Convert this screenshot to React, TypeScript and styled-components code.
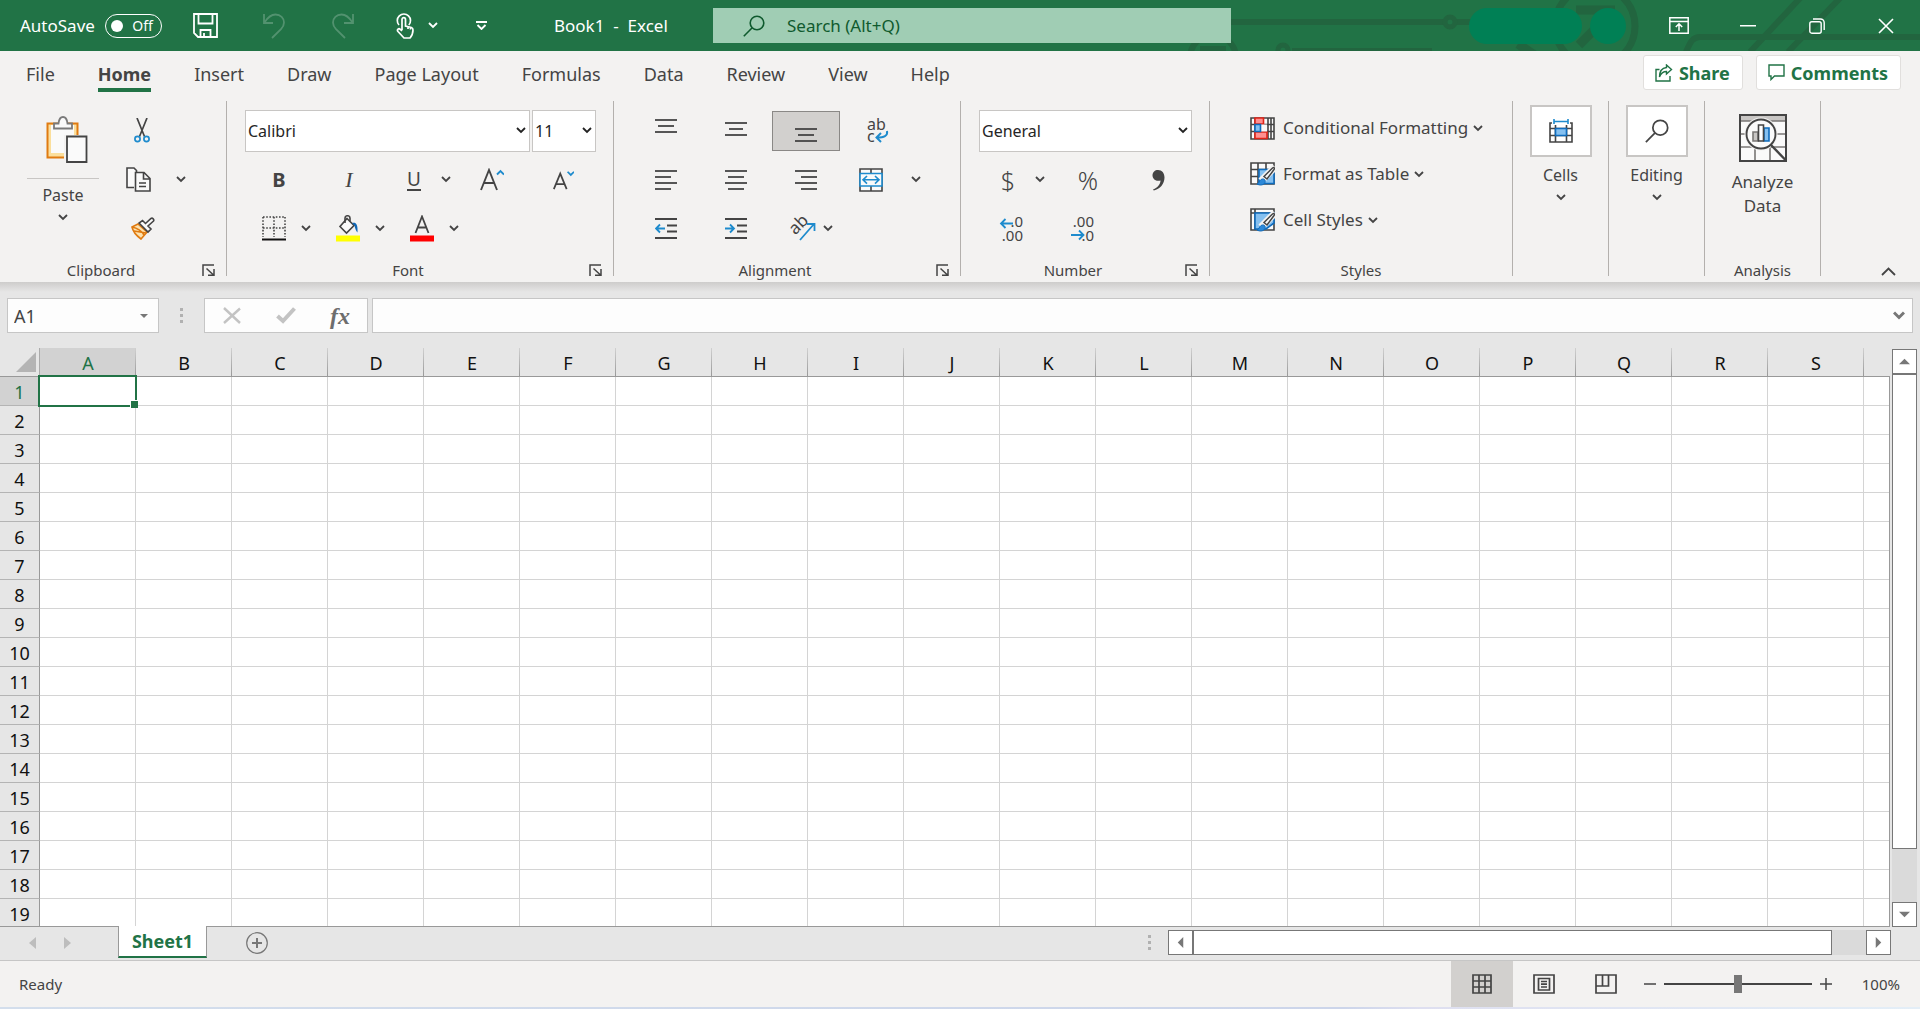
import React from "react";
import styled, { createGlobalStyle } from "styled-components";

const FONT = '"Noto Sans", "Open Sans", sans-serif';
const INK = "#444444";
const GREEN = "#217346";
const BLUE = "#1e8bcd";

const COLUMNS = "ABCDEFGHIJKLMNOPQRST".split("");
const ROWS = Array.from({ length: 19 }, (_, i) => i + 1);
const TABS = ["File", "Home", "Insert", "Draw", "Page Layout", "Formulas", "Data", "Review", "View", "Help"];

const GlobalStyle = createGlobalStyle`
  * { box-sizing: border-box; }
  body { margin: 0; font-family: ${FONT}; color: ${INK}; background: #e6e6e6; overflow: hidden; }
  button, input, select { font-family: inherit; color: inherit; }
  button { border: 0; padding: 0; background: none; cursor: pointer; }
  svg { display: block; flex: none; }
`;

const Window = styled.div`
  display: flex;
  flex-direction: column;
  height: 100vh;
  overflow: hidden;
`;

/* ---------- title bar ---------- */

const TitleBar = styled.header`
  position: relative;
  display: flex;
  align-items: center;
  height: 51px;
  flex: none;
  background: ${GREEN};
  color: #fff;
  font-size: 17px;
  line-height: 24px;
`;

const Circuit = styled.svg`
  position: absolute;
  top: 0;
  right: 0;
`;

const AutoSave = styled.label`
  display: flex;
  align-items: center;
  gap: 10px;
  width: 178px;
  padding-left: 20px;
`;

const Toggle = styled.button`
  display: flex;
  align-items: center;
  justify-content: space-between;
  width: 57px;
  height: 24px;
  padding: 0 8px 0 5px;
  border: 1px solid #fff;
  border-radius: 12px;
  font-size: 14px;
  line-height: 20px;

  &::before {
    content: "";
    width: 12px;
    height: 12px;
    border-radius: 50%;
    background: #fff;
  }
`;

const QuickButton = styled.button<{ $w: number; $dim?: boolean }>`
  display: flex;
  align-items: center;
  justify-content: center;
  gap: 14px;
  width: ${(p) => p.$w}px;
  height: 51px;
  opacity: ${(p) => (p.$dim ? 0.22 : 1)};
`;

const DocTitle = styled.div`
  width: 215px;
  padding-left: 56px;
  white-space: pre;
`;

const SearchBox = styled.label`
  position: relative;
  display: flex;
  align-items: center;
  gap: 22px;
  flex: 0 1 518px;
  height: 35px;
  padding-left: 30px;
  background: #a0cdb4;
  color: #0f5a2e;
`;

const SearchInput = styled.input`
  flex: 1;
  min-width: 0;
  border: 0;
  padding: 0;
  outline: 0;
  background: none;
  font-size: 17px;
  line-height: 24px;

  &::placeholder { color: #0f5a2e; opacity: 1; }
`;

const WindowControls = styled.div`
  position: relative;
  display: flex;
  align-items: center;
  margin-left: auto;
`;

const AccountName = styled.button`
  width: 113px;
  height: 36px;
  margin-right: 8px;
  border-radius: 18px;
  background: #008055;
`;

const Avatar = styled.button`
  width: 36px;
  height: 36px;
  margin-right: 18px;
  border-radius: 50%;
  background: #008055;
`;

const WindowButton = styled.button`
  display: flex;
  align-items: center;
  justify-content: center;
  width: 69px;
  height: 51px;
`;

/* ---------- tab row ---------- */

const TabRow = styled.nav`
  display: flex;
  align-items: flex-start;
  gap: 43px;
  height: 46px;
  flex: none;
  padding: 4px 19px 0 26px;
  background: #f3f2f1;
`;

const Tab = styled.button<{ $active: boolean }>`
  height: 37px;
  padding-top: 4px;
  border-bottom: 4px solid ${(p) => (p.$active ? GREEN : "transparent")};
  font-size: 18px;
  line-height: 28px;
  font-weight: ${(p) => (p.$active ? 700 : 400)};
`;

const TabActions = styled.div`
  display: flex;
  gap: 13px;
  margin-left: auto;
`;

const ActionButton = styled.button`
  display: flex;
  align-items: center;
  gap: 6px;
  height: 35px;
  padding: 0 12px 0 11px;
  border: 1px solid #e1dfdd;
  border-radius: 3px;
  background: #fff;
  color: ${GREEN};
  font-size: 18px;
  line-height: 26px;
  font-weight: 700;
`;

/* ---------- ribbon ---------- */

const Ribbon = styled.section`
  display: flex;
  flex: none;
  height: 185px;
  padding: 4px 0 6px;
  background: #f3f2f1;
`;

const Group = styled.div<{ $w: number }>`
  display: flex;
  flex-direction: column;
  justify-content: space-between;
  width: ${(p) => p.$w}px;
  height: 175px;
  border-right: 1px solid #b3b0ad;
`;

const GroupBody = styled.div<{ $left?: number }>`
  display: flex;
  padding-left: ${(p) => p.$left ?? 0}px;
`;

const GroupFooter = styled.div<{ $bare?: boolean }>`
  display: flex;
  align-items: flex-start;
  height: 16px;
  padding-right: ${(p) => (p.$bare ? 0 : 11)}px;
  font-size: 15px;
  line-height: 20px;

  & > button { align-self: flex-end; }
`;

const GroupLabel = styled.span`
  flex: 1;
  text-align: center;
`;

const Rows = styled.div`
  padding-top: 5px;
`;

const ToolRow = styled.div<{ $gap?: number; $left?: number }>`
  display: flex;
  align-items: center;
  gap: ${(p) => p.$gap ?? 0}px;
  height: 49px;
  padding-left: ${(p) => p.$left ?? 0}px;
`;

const Tool = styled.button<{ $w: number; $pressed?: boolean }>`
  display: flex;
  align-items: center;
  justify-content: center;
  gap: 7px;
  width: ${(p) => p.$w}px;
  height: 40px;
  border: 1px solid ${(p) => (p.$pressed ? "#8a8886" : "transparent")};
  background: ${(p) => (p.$pressed ? "#d2d0ce" : "transparent")};
`;

const Split = styled.div`
  display: flex;
`;

const PasteButton = styled.button`
  display: flex;
  flex-direction: column;
  align-items: center;
  width: 72px;
  padding-top: 15px;
  font-size: 16px;
  line-height: 22px;
`;

const PasteRule = styled.span`
  align-self: stretch;
  height: 1px;
  margin: 15px 0 5px;
  background: #c8c6c4;
`;

const ChevronSlot = styled.span`
  padding-top: 8px;
`;

const SelectWrap = styled.label<{ $w: number }>`
  display: grid;
  align-items: center;
  width: ${(p) => p.$w}px;

  & > * { grid-area: 1 / 1; }
  & > svg { justify-self: end; margin-right: 4px; pointer-events: none; }
`;

const Select = styled.select`
  appearance: none;
  width: 100%;
  height: 42px;
  padding: 0 2px;
  border: 1px solid #c8c6c4;
  border-radius: 0;
  background: #fff;
  color: #262626;
  font-size: 16px;
`;

const StyleList = styled.div`
  display: flex;
  flex-direction: column;
  padding-top: 4px;
`;

const StyleButton = styled.button`
  display: flex;
  align-items: center;
  gap: 8px;
  height: 46px;
  font-size: 17px;
  line-height: 24px;
  white-space: nowrap;
`;

const StyleName = styled.span`
  display: flex;
  align-items: center;
  gap: 5px;
`;

const TileButton = styled.button`
  display: flex;
  flex-direction: column;
  align-items: center;
  width: 100%;
  padding-top: 4px;
  font-size: 16px;
  line-height: 22px;
`;

const Tile = styled.span`
  display: flex;
  align-items: center;
  justify-content: center;
  width: 62px;
  height: 52px;
  margin-bottom: 7px;
  border: 2px solid #c8c6c4;
  background: #fff;
`;

const AnalyzeButton = styled.button`
  display: flex;
  flex-direction: column;
  align-items: center;
  gap: 8px;
  width: 100%;
  padding-top: 13px;
  font-size: 17px;
  line-height: 24px;
`;

const CollapseButton = styled.button`
  align-self: flex-end;
  margin: 0 24px 0 auto;
`;

/* ---------- formula bar ---------- */

const FormulaBar = styled.section`
  display: flex;
  flex: none;
  height: 66px;
  padding: 16px 7px 15px;
  background: linear-gradient(#cdcccb, #e6e6e6 10px);
`;

const NameBox = styled.label`
  display: flex;
  align-items: center;
  width: 152px;
  height: 35px;
  padding: 0 10px 0 6px;
  border: 1px solid #c6c6c6;
  background: #fdfdfd;
`;

const NameInput = styled.input`
  flex: 1;
  min-width: 0;
  padding: 0;
  border: 0;
  outline: 0;
  background: none;
  font-size: 18px;
`;

const Grip = styled.span`
  display: flex;
  flex-direction: column;
  gap: 3px;

  & > i { width: 3px; height: 3px; background: #b1b1b1; }
`;

const GripSlot = styled.div`
  display: flex;
  align-items: center;
  justify-content: center;
  width: 45px;
`;

const FormulaButtons = styled.div`
  display: flex;
  align-items: center;
  width: 164px;
  margin-right: 4px;
  border: 1px solid #c6c6c6;
  background: #fdfdfd;

  & > button { display: flex; justify-content: center; width: 54px; }
`;

const FxText = styled.span`
  font: italic bold 24px/30px "Liberation Serif", serif;
  color: #6d6d6d;
`;

const FormulaField = styled.div`
  display: flex;
  align-items: center;
  flex: 1;
  padding-right: 7px;
  border: 1px solid #c6c6c6;
  background: #fdfdfd;
`;

const FormulaInput = styled(NameInput)`
  padding: 0 6px;
`;

/* ---------- sheet ---------- */

const SheetArea = styled.main`
  display: flex;
  flex: 1;
  min-height: 0;
  padding-right: 2px;
`;

const SheetView = styled.div`
  position: relative;
  flex: 1;
  min-width: 0;
  overflow: hidden;
  border-bottom: 1px solid #999;

  &::after {
    content: "";
    position: absolute;
    top: 28px;
    right: 0;
    bottom: 0;
    width: 1px;
    background: #999;
  }
`;

const Table = styled.table`
  width: 0;
  table-layout: fixed;
  border-collapse: separate;
  border-spacing: 0;
  background: #fff;
  color: #111;
`;

const ColHead = styled.th<{ $active: boolean }>`
  width: 96px;
  height: 29px;
  padding: 3px 0 0;
  border-bottom: 1px solid #999;
  background: linear-gradient(#d0d0d0, #999) right / 1px 100% no-repeat,
    ${(p) => (p.$active ? "#d2d2d2" : "#e6e6e6")};
  color: ${(p) => (p.$active ? GREEN : "#111")};
  font-size: 18px;
  font-weight: 400;
  line-height: 25px;
`;

const Corner = styled.th`
  width: 40px;
  height: 29px;
  padding: 0 3px 4px 0;
  border-right: 1px solid #ababab;
  border-bottom: 1px solid #999;
  background: #e6e6e6;
  vertical-align: bottom;

  & > button { display: block; margin-left: auto; }
`;

const RowHead = styled.th<{ $active: boolean }>`
  height: 29px;
  padding: 2px 0 0;
  border-right: 1px solid #999;
  border-bottom: 1px solid #b4b4b4;
  background: ${(p) => (p.$active ? "#d2d2d2" : "#e6e6e6")};
  color: ${(p) => (p.$active ? GREEN : "#111")};
  font-size: 18px;
  font-weight: 400;
  line-height: 26px;
  text-align: center;
`;

const Cell = styled.td`
  position: relative;
  padding: 0;
  border-right: 1px solid #d4d4d4;
  border-bottom: 1px solid #d4d4d4;
`;

const Selection = styled.div`
  position: absolute;
  inset: -2px;
  z-index: 1;
  border: 2px solid ${GREEN};

  &::after {
    content: "";
    position: absolute;
    right: -3px;
    bottom: -3px;
    width: 7px;
    height: 7px;
    border: solid #fff;
    border-width: 1px 0 0 1px;
    background: ${GREEN};
  }
`;

const ScrollArrow = styled.button`
  display: flex;
  align-items: center;
  justify-content: center;
  flex: 0 0 25px;
  border: 1px solid #777;
  background: #fff;
`;

const VScroll = styled.div`
  display: flex;
  flex-direction: column;
  width: 25px;
  margin: 1px 1px 0 2px;
  background: #dadada;
`;

const HScroll = styled.div`
  display: flex;
  flex: 0 1 723px;
  height: 25px;
  background: #dadada;
`;

const Track = styled.div<{ $vertical?: boolean }>`
  display: flex;
  flex-direction: ${(p) => (p.$vertical ? "column" : "row")};
  flex: 1;
`;

const Thumb = styled.div<{ $size: number }>`
  flex: 0 0 ${(p) => p.$size}%;
  border: 1px solid #777;
  background: #fff;
`;

/* ---------- sheet tabs ---------- */

const SheetBar = styled.footer`
  display: flex;
  align-items: flex-start;
  flex: none;
  height: 34px;
  padding-right: 29px;
  border-bottom: 1px solid #c6c6c6;
  background: #e6e6e6;
`;

const SheetNav = styled.div`
  display: flex;
  align-items: center;
  gap: 28px;
  width: 118px;
  height: 31px;
  padding-left: 29px;
`;

const SheetTab = styled.button`
  position: relative;
  width: 89px;
  height: 32px;
  margin-top: -1px;
  border: solid #999;
  border-width: 0 1px;
  border-bottom: 2px solid ${GREEN};
  background: #fff;
  color: ${GREEN};
  font-size: 18px;
  font-weight: 700;
  line-height: 28px;
`;

const AddSheet = styled.button`
  margin: 5px 0 0 39px;
`;

const HScrollSlot = styled.div`
  display: flex;
  align-items: center;
  justify-content: flex-end;
  gap: 17px;
  flex: 1;
  padding-top: 3px;
`;

/* ---------- status bar ---------- */

const StatusBar = styled.footer`
  display: flex;
  align-items: center;
  flex: none;
  height: 46px;
  padding: 0 20px 0 19px;
  background: #f3f2f1;
  font-size: 15px;
  line-height: 22px;
`;

const Desktop = styled.div`
  flex: none;
  height: 2px;
  background: linear-gradient(90deg, #d3deec, #ccd5ea 70%, #dedff0 74%, #e3eef7);
`;

const ViewButtons = styled.div`
  display: flex;
  margin-left: auto;
`;

const ViewButton = styled.button<{ $active?: boolean }>`
  display: flex;
  align-items: center;
  justify-content: center;
  width: 62px;
  height: 46px;
  background: ${(p) => (p.$active ? "#d2d0ce" : "transparent")};
`;

const Zoom = styled.div`
  display: flex;
  align-items: center;
  gap: 8px;
  padding: 0 30px 0 7px;
`;

const ZoomSlider = styled.input`
  appearance: none;
  width: 148px;
  height: 18px;
  margin: 0;
  background: linear-gradient(${INK}, ${INK}) center / 100% 2px no-repeat;

  &::-webkit-slider-thumb {
    appearance: none;
    width: 8px;
    height: 18px;
    background: #777;
  }
`;

/* ---------- icons ---------- */

const Chevron = ({ color = INK }: { color?: string }) => (
  <svg width="10" height="7" viewBox="0 0 10 7" fill="none" stroke={color} strokeWidth="1.8">
    <path d="M1 1l4 4 4-4" />
  </svg>
);

const Triangle = ({ dir, color = "#777", size = 11 }: { dir: "up" | "down" | "left" | "right"; color?: string; size?: number }) => {
  const d = { up: "M0 9h12L6 3z", down: "M0 3h12L6 9z", left: "M9 0v12L3 6z", right: "M3 0v12l6-6z" }[dir];
  return (
    <svg width={size} height={size} viewBox="0 0 12 12">
      <path d={d} fill={color} />
    </svg>
  );
};

const Lines = ({ rows, shift = 0 }: { rows: [number, number][]; shift?: number }) => (
  <svg width="22" height="24" viewBox="0 0 22 24" stroke={INK} strokeWidth="1.8">
    {rows.map(([a, b], i) => (
      <path key={i} d={`M${a} ${i * 6 + 3 + shift}H${b}`} />
    ))}
  </svg>
);

const IndentIcon = ({ right }: { right?: boolean }) => (
  <svg width="22" height="24" viewBox="0 0 22 24" fill="none" stroke={INK} strokeWidth="1.8">
    <path d="M0 2h22M12 8.500h10M12 14.500h10M0 21h22" />
    <path d={right ? "M0 11.500h9M5 7.500l4 4-4 4" : "M10 11.500H1M5 7.500l-4 4 4 4"} stroke={BLUE} />
  </svg>
);

const SaveIcon = () => (
  <svg width="25" height="25" viewBox="0 0 25 25" fill="none" stroke="#fff" strokeWidth="1.8">
    <path d="M1 1h23v23H5l-4-4zM5.500 1v9.500h14V1M7.500 24v-7h10v7M11 24v-4" />
  </svg>
);

const UndoIcon = ({ flip }: { flip?: boolean }) => (
  <svg width="24" height="26" viewBox="0 0 24 26" fill="none" stroke="#fff" strokeWidth="1.8" transform={flip ? "scale(-1 1)" : undefined}>
    <path d="M2 1v9h9M2.500 9.500C6 4 9 1.500 13.500 1.500c5 0 8.500 3.500 8.500 8 0 3-1.200 4.800-3 6.700L10 25" />
  </svg>
);

const TouchIcon = () => (
  <svg width="18" height="26" viewBox="0 0 18 26" fill="none" stroke="#fff" strokeWidth="1.7">
    <path d="M3 12a6.600 6.600 0 1 1 9.800 0" />
    <path d="M6 17V6.500c0-2.500 3.500-2.500 3.500 0V13l6 1.500c1.300.4 1.500 1.200 1.500 2.500 0 3-.8 5.500-3 8H8L2 18.500c-1.500-2 .8-3.500 2.300-2.200L6 18M12 13.500V16M14.500 14.200V16.500" />
  </svg>
);

const CustomizeIcon = () => (
  <svg width="11" height="9" viewBox="0 0 11 9" fill="none" stroke="#fff" strokeWidth="1.8">
    <path d="M0 1h11M1.500 4l4 4 4-4" />
  </svg>
);

const Magnifier = ({ size = 22, color = INK, width = 1.6 }: { size?: number; color?: string; width?: number }) => (
  <svg width={size} height={size} viewBox="0 0 22 22" fill="none" stroke={color} strokeWidth={width}>
    <circle cx="14" cy="8" r="6.800" />
    <path d="M9.200 12.800L.8 21.200" />
  </svg>
);

const RibbonDisplayIcon = () => (
  <svg width="20" height="17" viewBox="0 0 20 17" fill="none" stroke="#fff" strokeWidth="1.500">
    <path d="M.8.800h18.400v15.400H.800zM.800 4.500h18.400M10 14V7M6.800 10L10 6.800 13.200 10" />
  </svg>
);

const RestoreIcon = () => (
  <svg width="16" height="16" viewBox="0 0 16 16" fill="none" stroke="#fff" strokeWidth="1.400">
    <rect x=".8" y="3.800" width="11.400" height="11.400" rx="2" />
    <path d="M4 1h7.500A3.700 3.700 0 0 1 15.200 4.700V12" />
  </svg>
);

const ShareIcon = () => (
  <svg width="18" height="18" viewBox="0 0 18 18" fill="none" stroke={GREEN} strokeWidth="1.400">
    <path d="M4.500 5.500H1V17h14v-5M11.500 1l5 4.500-5 4.500V7.500C8 7.500 6 9 4.500 13c0-5.500 2.500-9 7-9.500z" />
  </svg>
);

const CommentIcon = () => (
  <svg width="17" height="17" viewBox="0 0 17 17" fill="none" stroke={GREEN} strokeWidth="1.400">
    <path d="M1 1h15v11H6.500L3 15.500V12H1z" />
  </svg>
);

const PasteIcon = () => (
  <svg width="49" height="47" viewBox="-7 0 49 47" fill="none">
    <path d="M1.500 7.500h30v34h-30z" fill="#fbdf9c" stroke="#e07b11" strokeWidth="2" />
    <path d="M5 9h23v28H5z" fill="#fafafa" />
    <path d="M8 12.500v-5h4.500C13 3 15 1 17 1s4 2 4.500 6.500H26v5z" fill="#fafafa" stroke="#7a7a7a" strokeWidth="1.800" />
    <path d="M18 19h24v28H18z" fill="#f3f2f1" />
    <path d="M21 20.500h19.500v25.500H21z" fill="#fafafa" stroke={INK} strokeWidth="1.800" />
  </svg>
);

const CutIcon = () => (
  <svg width="16" height="25" viewBox="0 0 16 25" fill="none" strokeWidth="1.700">
    <path d="M3 0l7.500 18.500M13 0L5.500 18.500" stroke={INK} />
    <circle cx="3.500" cy="21" r="2.600" stroke={BLUE} />
    <circle cx="12.500" cy="21" r="2.600" stroke={BLUE} />
  </svg>
);

const CopyIcon = () => (
  <svg width="25" height="25" viewBox="0 0 25 25" stroke={INK} strokeWidth="1.600" fill="#fafafa">
    <path d="M8 20.500H1V1h7l2.500 2.500V20" />
    <path d="M9.500 5.500h8.500l6 6V24H9.500zM17.500 5.500V12H24M13 16h7M13 19.500h7" />
  </svg>
);

const PainterIcon = () => (
  <svg width="25" height="23" viewBox="0 0 25 23" strokeWidth="1.600">
    <path d="M2 10l6-3 9 8-6 7C7 19 3 15 2 10z" fill="#fde3b0" stroke="#e07b11" />
    <path d="M4 14l12 2M2 10c5 1 9 3 12 8" stroke="#e07b11" fill="none" />
    <path d="M9 6l9 9 3-3-3-3 5.500-5c1-1.500-1-3.500-2.500-2.500L15.500 6.500 12.500 3.500z" fill="#fafafa" stroke={INK} />
  </svg>
);

const FormatA = ({ down }: { down?: boolean }) => (
  <svg width={down ? 22 : 24} height="24" viewBox="0 0 24 24" fill="none" strokeWidth="1.900">
    <path d={down ? "M2 22L9 5l7 17M4.500 16.500h9" : "M1 22L9 2l8 20M4 15h10"} stroke={INK} />
    <path d={down ? "M17 3l3.500 3.500L24 3" : "M17 6.500L20.500 3 24 6.500"} stroke={BLUE} />
  </svg>
);

const BoldIcon = styled.span`
  font-size: 20px;
  line-height: 24px;
  font-weight: 700;
`;

const ItalicIcon = styled.span`
  font: italic 22px/24px "Liberation Serif", serif;
`;

const UnderlineIcon = styled.span`
  border-bottom: 2px solid ${INK};
  font-size: 19px;
  line-height: 20px;
`;

const BordersIcon = () => (
  <svg width="24" height="25" viewBox="0 0 24 25" fill="none" stroke={INK}>
    <path d="M1 1h22M1 12h22M1 1v20M12 1v20M23 1v20" strokeWidth="1.600" strokeDasharray="1.600 1.600" />
    <path d="M0 23.500h24" stroke="#111" strokeWidth="2" />
  </svg>
);

const FillIcon = () => (
  <svg width="24" height="27" viewBox="0 0 24 27" fill="none">
    <path d="M11 3.500l7 7L10.500 18 4 11.500z" fill="#fafafa" stroke={INK} strokeWidth="1.600" />
    <path d="M9 8V3c0-3 5-3 5 0v3.500" stroke={INK} strokeWidth="1.600" />
    <path d="M16 8c4-1 6 1 5.500 9.500C20 16 19 13 18.500 10.500z" fill="#1066b5" />
    <path d="M0 20.500h24v6H0z" fill="#ff0" />
  </svg>
);

const FontColorIcon = () => (
  <svg width="24" height="27" viewBox="0 0 24 27" fill="none">
    <path d="M5.500 18L12 1.500 18.500 18M8 12.500h8" stroke={INK} strokeWidth="1.800" />
    <path d="M0 20.500h24v6H0z" fill="red" />
  </svg>
);

const IconSvg = styled.svg`
  overflow: visible;
`;

const IconText = styled.text`
  font-family: ${FONT};
  fill: ${INK};
  stroke: none;
`;

const WrapIcon = () => (
  <IconSvg width="22" height="26" viewBox="0 0 22 26" fill="none">
    <IconText x="0" y="12" fontSize="16">ab</IconText>
    <IconText x="0" y="24" fontSize="16">c</IconText>
    <path d="M20 13c1 5-3 6.500-10 6.500M14 15l-4.500 4.500L14 24" stroke={BLUE} strokeWidth="2" />
  </IconSvg>
);

const MergeIcon = () => (
  <svg width="24" height="24" viewBox="0 0 24 24" fill="none" strokeWidth="1.600">
    <path d="M1 1h22v22H1zM12 1v22" fill="#fafafa" stroke={INK} />
    <path d="M1 5.500h22v12.500H1z" fill="#fafafa" stroke={BLUE} />
    <path d="M4 11.800h16M8 8l-4 3.800L8 15.600M16 8l4 3.800-4 3.800" stroke={BLUE} />
  </svg>
);

const OrientationIcon = () => (
  <IconSvg width="24" height="24" viewBox="0 0 24 24" fill="none">
    <IconText x="-2" y="14" fontSize="17" transform="rotate(-45 6 10)">ab</IconText>
    <path d="M8 23L22 7M15 7h7.500v7" stroke={BLUE} strokeWidth="1.800" />
  </IconSvg>
);

const DecimalIcon = ({ decrease }: { decrease?: boolean }) => (
  <IconSvg width="24" height="26" viewBox="0 0 24 26" fill="none">
    <IconText x="23" y="11" fontSize="15" textAnchor="end">{decrease ? ".00" : ".0"}</IconText>
    <IconText x="23" y="25" fontSize="15" textAnchor="end">{decrease ? ".0" : ".00"}</IconText>
    <path d={decrease ? "M0 19h12M8 14.500l4.500 4.500L8 23.500" : "M13 7.500H1M5.500 3L1 7.500 5.500 12"} stroke={BLUE} strokeWidth="1.800" />
  </IconSvg>
);

const DollarText = styled.span`
  font-size: 25px;
  line-height: 30px;
  font-weight: 300;
`;

const CommaIcon = () => (
  <svg width="13" height="22" viewBox="0 0 13 22">
    <path d="M1 20.500C6 18.500 8.500 15 8.500 11.500 3 13 .5 9 .5 6.500.5 3 3 1 6 1c4 0 6.500 3 6.500 7.500C12.500 15 8 20 1.800 21.500z" fill={INK} />
  </svg>
);

const ConditionalIcon = () => (
  <svg width="25" height="23" viewBox="0 0 25 23" fill="none" strokeWidth="1.600">
    <path d="M1 1h23v21H1zM1 7.500h23M1 14.500h23M5 1v21M18 1v21M21 1v21" fill="#fafafa" stroke={INK} />
    <path d="M5 1h8.500v6H5zM5 15h12v6.500H5z" fill="#ff9090" stroke="#e02418" />
    <path d="M11 7.500h6v7h-6z" fill="#fafafa" />
    <path d="M5 7.500h5.500v7H5z" fill="#85c0f0" stroke="#0f6cbd" />
  </svg>
);

const TableStyleIcon = ({ whole }: { whole?: boolean }) => (
  <svg width="25" height="24" viewBox="0 0 25 24" fill="none" strokeWidth="1.600">
    <path d={whole ? "M1 1h23v21H1zM1 5h23M5 1v21" : "M1 1h23v21H1zM1 7.500h23M1 14.500h23M8 1v21M16 1v21"} fill="#fafafa" stroke={INK} />
    <path d={whole ? "M5 5h19v10l-8 6H5z" : "M9 7.500h15v14H9z"} fill="#85c0f0" stroke="#0f6cbd" />
    <path d="M25 5L11 19" stroke="#f3f2f1" strokeWidth="7" />
    <path d="M14 14.500L22.500 6c1.500-1 2.500 0 1.500 1.500L17 17z" fill="#fafafa" stroke={INK} strokeWidth="1.500" />
    <path d="M7 22c2-.5 2-3 4-4.500 3-1.500 5 .5 4 3-1.500 3-5.500 3-8 1.500z" fill="#2b88d8" stroke="#0f6cbd" strokeWidth="1" />
  </svg>
);

const CellsIcon = () => (
  <svg width="24" height="24" viewBox="0 0 24 24" fill="none" strokeWidth="1.600">
    <path d="M3 4H1v19h22V4h-2M1 9.500h22M1 16.500h22M6.500 6v17M17.500 6v17" stroke={INK} />
    <path d="M6.500 9.500h11v7h-11z" fill="#85c0f0" stroke="#0f6cbd" />
    <path d="M5 2.500h14M5 0v5M19 0v5" stroke={BLUE} />
  </svg>
);

const AnalyzeIcon = () => (
  <svg width="48" height="48" viewBox="0 0 48 48" fill="none">
    <path d="M1 1h46v46H1z" fill="#fafafa" />
    <path d="M1 1h46v6H1z" fill="#c8c6c4" />
    <path d="M1 7h46M1 20h46M1 33h46M16 33v14M31 33v14" stroke="#797775" strokeWidth="1.600" />
    <path d="M1 1h46v46H1z" stroke={INK} strokeWidth="2" />
    <circle cx="22" cy="20" r="16.500" fill="#f3f2f1" />
    <circle cx="22" cy="20" r="14.500" fill="#fafafa" stroke={INK} strokeWidth="1.900" />
    <path d="M14 18h5v9h-5z" fill="#c8c6c4" stroke="#797775" strokeWidth="1.600" />
    <path d="M25 14h5v13h-5z" fill="#85c0f0" stroke="#0f6cbd" strokeWidth="1.600" />
    <path d="M19.500 11h5v16h-5z" fill="#fff" stroke={INK} strokeWidth="1.600" />
    <path d="M32 31l15 15.500" stroke={INK} strokeWidth="2.400" />
  </svg>
);

const LauncherIcon = () => (
  <svg width="13" height="12" viewBox="0 0 13 12" fill="none" stroke={INK} strokeWidth="1.500">
    <path d="M1 12V1h11M4.500 4.500l7 6.500M12 5v6.200H6" />
  </svg>
);

const Launcher = ({ name }: { name: string }) => (
  <button aria-label={`${name} settings`}>
    <LauncherIcon />
  </button>
);

const More = ({ name, w = 20 }: { name: string; w?: number }) => (
  <Tool $w={w} aria-label={`${name} options`}>
    <Chevron />
  </Tool>
);

const GripDots = () => (
  <Grip>
    <i />
    <i />
    <i />
  </Grip>
);

/* ---------- sections ---------- */

const Title = () => (
  <TitleBar>
    <Circuit width="920" height="51" viewBox="0 0 920 51" fill="none" stroke="#22653f" strokeWidth="6" aria-hidden="true">
      <path d="M231 22h213M456 22h30M292 51h140M686 52c4-9 6-15 14-15h220M750 52L802 -4M788 52L842 -4" />
      <circle cx="450" cy="22" r="5" strokeWidth="5" />
      <circle cx="283" cy="50" r="5" strokeWidth="5" />
      <circle cx="213" cy="58" r="23" />
      <path d="M200 49h26" />
      <circle cx="595" cy="26" r="40" strokeWidth="7" />
      <path d="M576 10h39M579 45l22-22M518 44l18 12" strokeWidth="9" />
    </Circuit>
    <AutoSave>
      AutoSave
      <Toggle role="switch" aria-checked="false">Off</Toggle>
    </AutoSave>
    <QuickButton $w={54} aria-label="Save"><SaveIcon /></QuickButton>
    <QuickButton $w={84} $dim aria-label="Undo"><UndoIcon /></QuickButton>
    <QuickButton $w={54} $dim aria-label="Redo"><UndoIcon flip /></QuickButton>
    <QuickButton $w={94} aria-label="Touch mode"><TouchIcon /><Chevron color="#fff" /></QuickButton>
    <QuickButton $w={34} aria-label="Customize toolbar"><CustomizeIcon /></QuickButton>
    <DocTitle>Book1  -  Excel</DocTitle>
    <SearchBox>
      <Magnifier color="#0f5a2e" />
      <SearchInput placeholder="Search (Alt+Q)" aria-label="Search" />
    </SearchBox>
    <WindowControls>
      <AccountName aria-label="Account" />
      <Avatar aria-label="Profile" />
      <WindowButton aria-label="Ribbon display"><RibbonDisplayIcon /></WindowButton>
      <WindowButton aria-label="Minimize">
        <svg width="16" height="2" viewBox="0 0 16 2"><path d="M0 0h16v1.500H0z" fill="#fff" /></svg>
      </WindowButton>
      <WindowButton aria-label="Restore"><RestoreIcon /></WindowButton>
      <WindowButton aria-label="Close">
        <svg width="16" height="16" viewBox="0 0 16 16" stroke="#fff" strokeWidth="1.600"><path d="M1 1l14 14M15 1L1 15" /></svg>
      </WindowButton>
    </WindowControls>
  </TitleBar>
);

const ClipboardGroup = () => (
  <Group $w={227}>
    <GroupBody $left={27}>
      <PasteButton>
        <PasteIcon />
        <PasteRule />
        Paste
        <ChevronSlot><Chevron /></ChevronSlot>
      </PasteButton>
      <Rows>
        <ToolRow $left={20}><Tool $w={46} aria-label="Cut"><CutIcon /></Tool></ToolRow>
        <ToolRow $left={16} $gap={10}>
          <Tool $w={46} aria-label="Copy"><CopyIcon /></Tool>
          <More name="Copy" />
        </ToolRow>
        <ToolRow $left={20}><Tool $w={46} aria-label="Format painter"><PainterIcon /></Tool></ToolRow>
      </Rows>
    </GroupBody>
    <GroupFooter><GroupLabel>Clipboard</GroupLabel><Launcher name="Clipboard" /></GroupFooter>
  </Group>
);

const FontGroup = () => (
  <Group $w={387}>
    <GroupBody $left={18}>
      <Rows>
        <ToolRow $gap={2}>
          <SelectWrap $w={285}>
            <Select aria-label="Font"><option>Calibri</option></Select>
            <Chevron color="#222" />
          </SelectWrap>
          <SelectWrap $w={64}>
            <Select aria-label="Font size"><option>11</option></Select>
            <Chevron color="#222" />
          </SelectWrap>
        </ToolRow>
        <ToolRow $left={7} $gap={10}>
          <Tool $w={54} aria-label="Bold"><BoldIcon>B</BoldIcon></Tool>
          <Tool $w={66} aria-label="Italic"><ItalicIcon>I</ItalicIcon></Tool>
          <Split>
            <Tool $w={44} aria-label="Underline"><UnderlineIcon>U</UnderlineIcon></Tool>
            <More name="Underline" />
          </Split>
          <Tool $w={52} aria-label="Increase font size"><FormatA /></Tool>
          <Tool $w={70} aria-label="Decrease font size"><FormatA down /></Tool>
        </ToolRow>
        <ToolRow $left={7} $gap={10}>
          <Split><Tool $w={44} aria-label="Borders"><BordersIcon /></Tool><More name="Borders" /></Split>
          <Split><Tool $w={44} aria-label="Fill color"><FillIcon /></Tool><More name="Fill color" /></Split>
          <Split><Tool $w={44} aria-label="Font color"><FontColorIcon /></Tool><More name="Font color" /></Split>
        </ToolRow>
      </Rows>
    </GroupBody>
    <GroupFooter><GroupLabel>Font</GroupLabel><Launcher name="Font" /></GroupFooter>
  </Group>
);

const AlignmentGroup = () => (
  <Group $w={347}>
    <GroupBody $left={18}>
      <Rows>
        <ToolRow $gap={2}>
          <Tool $w={68} aria-label="Top align"><Lines shift={-2} rows={[[0, 22], [3, 19], [0, 22]]} /></Tool>
          <Tool $w={68} aria-label="Middle align"><Lines shift={1} rows={[[0, 22], [4, 18], [0, 22]]} /></Tool>
          <Tool $w={68} $pressed aria-label="Bottom align"><Lines shift={7} rows={[[0, 22], [3, 19], [0, 22]]} /></Tool>
          <Tool $w={72} aria-label="Wrap text"><WrapIcon /></Tool>
        </ToolRow>
        <ToolRow $gap={2}>
          <Tool $w={68} aria-label="Align left"><Lines rows={[[0, 22], [0, 16], [0, 22], [0, 16]]} /></Tool>
          <Tool $w={68} aria-label="Center"><Lines rows={[[0, 22], [3, 19], [0, 22], [3, 19]]} /></Tool>
          <Tool $w={68} aria-label="Align right"><Lines rows={[[0, 22], [6, 22], [0, 22], [6, 22]]} /></Tool>
          <Tool $w={58} aria-label="Merge and center"><MergeIcon /></Tool>
          <More name="Merge" w={28} />
        </ToolRow>
        <ToolRow $gap={2}>
          <Tool $w={68} aria-label="Decrease indent"><IndentIcon /></Tool>
          <Tool $w={68} aria-label="Increase indent"><IndentIcon right /></Tool>
          <Tool $w={80} aria-label="Orientation"><OrientationIcon /><Chevron /></Tool>
        </ToolRow>
      </Rows>
    </GroupBody>
    <GroupFooter><GroupLabel>Alignment</GroupLabel><Launcher name="Alignment" /></GroupFooter>
  </Group>
);

const NumberGroup = () => (
  <Group $w={249}>
    <GroupBody $left={18}>
      <Rows>
        <ToolRow>
          <SelectWrap $w={213}>
            <Select aria-label="Number format"><option>General</option></Select>
            <Chevron color="#222" />
          </SelectWrap>
        </ToolRow>
        <ToolRow $left={7} $gap={10}>
          <Split>
            <Tool $w={44} aria-label="Accounting format"><DollarText>$</DollarText></Tool>
            <More name="Accounting format" />
          </Split>
          <Tool $w={56} aria-label="Percent style"><DollarText>%</DollarText></Tool>
          <Tool $w={64} aria-label="Comma style"><CommaIcon /></Tool>
        </ToolRow>
        <ToolRow $left={7} $gap={10}>
          <Tool $w={52} aria-label="Increase decimal"><DecimalIcon /></Tool>
          <Tool $w={70} aria-label="Decrease decimal"><DecimalIcon decrease /></Tool>
        </ToolRow>
      </Rows>
    </GroupBody>
    <GroupFooter><GroupLabel>Number</GroupLabel><Launcher name="Number" /></GroupFooter>
  </Group>
);

const StylesGroup = () => (
  <Group $w={303}>
    <GroupBody $left={40}>
      <StyleList>
        <StyleButton><ConditionalIcon /><StyleName>Conditional Formatting<Chevron /></StyleName></StyleButton>
        <StyleButton><TableStyleIcon /><StyleName>Format as Table<Chevron /></StyleName></StyleButton>
        <StyleButton><TableStyleIcon whole /><StyleName>Cell Styles<Chevron /></StyleName></StyleButton>
      </StyleList>
    </GroupBody>
    <GroupFooter $bare><GroupLabel>Styles</GroupLabel></GroupFooter>
  </Group>
);

const RibbonBar = () => (
  <Ribbon>
    <ClipboardGroup />
    <FontGroup />
    <AlignmentGroup />
    <NumberGroup />
    <StylesGroup />
    <Group $w={96}>
      <TileButton>
        <Tile><CellsIcon /></Tile>
        Cells
        <ChevronSlot><Chevron /></ChevronSlot>
      </TileButton>
    </Group>
    <Group $w={96}>
      <TileButton>
        <Tile><Magnifier size={24} /></Tile>
        Editing
        <ChevronSlot><Chevron /></ChevronSlot>
      </TileButton>
    </Group>
    <Group $w={116}>
      <AnalyzeButton>
        <AnalyzeIcon />
        <span>Analyze<br />Data</span>
      </AnalyzeButton>
      <GroupFooter $bare><GroupLabel>Analysis</GroupLabel></GroupFooter>
    </Group>
    <CollapseButton aria-label="Collapse ribbon">
      <svg width="15" height="9" viewBox="0 0 15 9" fill="none" stroke={INK} strokeWidth="1.800"><path d="M1 8l6.500-6.500L14 8" /></svg>
    </CollapseButton>
  </Ribbon>
);

const Formula = () => (
  <FormulaBar>
    <NameBox>
      <NameInput defaultValue="A1" aria-label="Name box" />
      <svg width="8" height="4" viewBox="0 0 8 4"><path d="M0 0h8L4 4z" fill="#777" /></svg>
    </NameBox>
    <GripSlot><GripDots /></GripSlot>
    <FormulaButtons>
      <button aria-label="Cancel">
        <svg width="18" height="17" viewBox="0 0 18 17" stroke="#c3c3c3" strokeWidth="2.400"><path d="M1 1l16 15M17 1.500L1 16" /></svg>
      </button>
      <button aria-label="Enter">
        <svg width="20" height="17" viewBox="0 0 20 17" fill="none" stroke="#c3c3c3" strokeWidth="4"><path d="M1.500 9l5.500 5L18.500 1.500" /></svg>
      </button>
      <button aria-label="Insert function"><FxText>fx</FxText></button>
    </FormulaButtons>
    <FormulaField>
      <FormulaInput aria-label="Formula" />
      <svg width="12" height="9" viewBox="0 0 12 9" fill="none" stroke="#777" strokeWidth="3"><path d="M1 1.500l5 5 5-5" /></svg>
    </FormulaField>
  </FormulaBar>
);

const Sheet = () => (
  <SheetArea>
    <SheetView>
      <Table>
        <thead>
          <tr>
            <Corner>
              <button aria-label="Select all">
                <svg width="20" height="20" viewBox="0 0 20 20"><path d="M20 0v20H0z" fill="#b4b4b4" /></svg>
              </button>
            </Corner>
            {COLUMNS.map((c) => (
              <ColHead key={c} scope="col" $active={c === "A"}>{c}</ColHead>
            ))}
          </tr>
        </thead>
        <tbody>
          {ROWS.map((r) => (
            <tr key={r}>
              <RowHead scope="row" $active={r === 1}>{r}</RowHead>
              {COLUMNS.map((c) => (
                <Cell key={c}>{r === 1 && c === "A" && <Selection />}</Cell>
              ))}
            </tr>
          ))}
        </tbody>
      </Table>
    </SheetView>
    <VScroll>
      <ScrollArrow aria-label="Scroll up"><Triangle dir="up" /></ScrollArrow>
      <Track $vertical><Thumb $size={90} /></Track>
      <ScrollArrow aria-label="Scroll down"><Triangle dir="down" /></ScrollArrow>
    </VScroll>
  </SheetArea>
);

const Tabs = () => (
  <SheetBar>
    <SheetNav>
      <button aria-label="Previous sheet"><svg width="7" height="12" viewBox="0 0 7 12"><path d="M7 0v12L0 6z" fill="#bdbdbd" /></svg></button>
      <button aria-label="Next sheet"><svg width="7" height="12" viewBox="0 0 7 12"><path d="M0 0v12l7-6z" fill="#bdbdbd" /></svg></button>
    </SheetNav>
    <SheetTab>Sheet1</SheetTab>
    <AddSheet aria-label="New sheet">
      <svg width="22" height="22" viewBox="0 0 22 22" fill="none" stroke="#777">
        <circle cx="11" cy="11" r="10.300" strokeWidth="1.200" />
        <path d="M11 6v10M6 11h10" strokeWidth="2" />
      </svg>
    </AddSheet>
    <HScrollSlot>
      <GripDots />
      <HScroll>
        <ScrollArrow aria-label="Scroll left"><Triangle dir="left" /></ScrollArrow>
        <Track><Thumb $size={95} /></Track>
        <ScrollArrow aria-label="Scroll right"><Triangle dir="right" /></ScrollArrow>
      </HScroll>
    </HScrollSlot>
  </SheetBar>
);

const Status = () => (
  <StatusBar>
    Ready
    <ViewButtons>
      <ViewButton $active aria-label="Normal view">
        <svg width="20" height="20" viewBox="0 0 20 20" fill="none" stroke={INK} strokeWidth="1.700"><path d="M1 1h18v18H1zM1 7h18M1 13h18M7 1v18M13 1v18" /></svg>
      </ViewButton>
      <ViewButton aria-label="Page layout view">
        <svg width="22" height="20" viewBox="0 0 22 20" fill="none" stroke={INK} strokeWidth="1.700"><path d="M1 1h20v18H1zM5.500 4.500h11v11.500h-11zM8 7.500h6M8 10.200h6M8 13h6" /></svg>
      </ViewButton>
      <ViewButton aria-label="Page break view">
        <svg width="22" height="20" viewBox="0 0 22 20" fill="none" stroke={INK} strokeWidth="1.700"><path d="M1 1h20v18H1zM1 12h12.500V1M7.500 1v11" /></svg>
      </ViewButton>
    </ViewButtons>
    <Zoom>
      <button aria-label="Zoom out"><svg width="12" height="12" viewBox="0 0 12 12" stroke={INK} strokeWidth="1.500"><path d="M0 6h12" /></svg></button>
      <ZoomSlider type="range" min="0" max="100" defaultValue="50" aria-label="Zoom" />
      <button aria-label="Zoom in"><svg width="12" height="12" viewBox="0 0 12 12" stroke={INK} strokeWidth="1.500"><path d="M0 6h12M6 0v12" /></svg></button>
    </Zoom>
    100%
  </StatusBar>
);

export default function App() {
  return (
    <Window>
      <GlobalStyle />
      <Title />
      <TabRow>
        {TABS.map((t) => (
          <Tab key={t} $active={t === "Home"}>{t}</Tab>
        ))}
        <TabActions>
          <ActionButton><ShareIcon />Share</ActionButton>
          <ActionButton><CommentIcon />Comments</ActionButton>
        </TabActions>
      </TabRow>
      <RibbonBar />
      <Formula />
      <Sheet />
      <Tabs />
      <Status />
      <Desktop />
    </Window>
  );
}
